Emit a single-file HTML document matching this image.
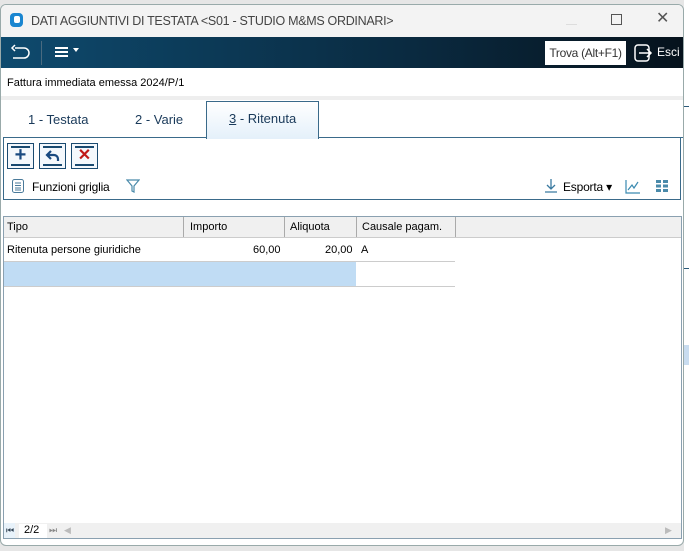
<!DOCTYPE html><html><head><style>
body{margin:0;width:689px;height:551px;background:#e6e6e6;font-family:"Liberation Sans",sans-serif;position:relative;overflow:hidden;font-size:12px;color:#000}
.a{position:absolute}
.b{position:absolute;top:138px;width:27px;height:26px;border:1px solid #1a4a70;box-sizing:border-box;background:#f4f8fc}
.b:before,.b:after{content:"";position:absolute;left:3px;right:3px;height:2px;background:#1a4a70}
.b:before{top:2px}.b:after{bottom:2px}
</style></head><body>
<div class="a" style="left:684px;top:0;width:5px;height:551px;background:#fff"></div>
<div class="a" style="left:684px;top:106px;width:5px;height:1px;background:#2a5a7a"></div>
<div class="a" style="left:684px;top:268px;width:5px;height:1px;background:#2a5a7a"></div>
<div class="a" style="left:684px;top:345px;width:5px;height:20px;background:#c8dcf0"></div>
<div class="a" style="left:0;top:4px;width:684px;height:542px;background:#fff;border:1px solid #9aa;border-radius:6px;box-sizing:border-box;overflow:hidden">
 <div class="a" style="left:0;top:0;width:684px;height:32px;background:#f3f3f3"></div>
 <div class="a" style="left:9px;top:8px;width:13px;height:14px;background:#1a86d0;border-radius:4px"><div class="a" style="left:4px;top:3px;width:6px;height:7px;background:#fff;border-radius:2px"></div></div>
 <div class="a" style="left:30px;top:9px;font-size:12.5px;color:#444;letter-spacing:-0.3px">DATI AGGIUNTIVI DI TESTATA &lt;S01 - STUDIO M&amp;MS ORDINARI&gt;</div>
 <div class="a" style="left:565px;top:19px;width:11px;height:1px;background:#ddd"></div>
 <div class="a" style="left:610px;top:9px;width:9px;height:9px;border:1px solid #555"></div>
 <div class="a" style="left:655px;top:3px;font-size:16px;color:#555">✕</div>
 <div class="a" style="left:0;top:32px;width:684px;height:31px;background:linear-gradient(90deg,#0e4a6e,#0a2a40 60%,#06121c)"></div>
 <svg class="a" style="left:8px;top:38px" width="24" height="20"><path d="M6 5h9a5 5 0 0 1 0 10H4M6 2L3 5l3 3" fill="none" stroke="#fff" stroke-width="1.5"/></svg>
 <div class="a" style="left:40px;top:36px;width:1px;height:24px;background:#4a6a80"></div>
 <div class="a" style="left:54px;top:42px;width:13px;height:10px;border-top:2px solid #fff;border-bottom:2px solid #fff;box-sizing:border-box"><div style="margin-top:2px;height:2px;background:#fff"></div></div>
 <div class="a" style="left:72px;top:43px;border:3px solid transparent;border-top:4px solid #fff"></div>
 <div class="a" style="left:544px;top:36px;width:81px;height:24px;background:#fff;font-size:12px;line-height:24px;text-align:center;color:#333;letter-spacing:-0.3px">Trova (Alt+F1)</div>
 <svg class="a" style="left:632px;top:38px" width="22" height="20"><rect x="2" y="2" width="14" height="16" rx="3" fill="none" stroke="#fff" stroke-width="1.5"/><path d="M6 10h12M14 6l4 4-4 4" fill="none" stroke="#fff" stroke-width="1.5"/></svg>
 <div class="a" style="left:656px;top:40px;color:#fff;font-size:12px">Esci</div>
 <div class="a" style="left:6px;top:72px;font-size:11px">Fattura immediata emessa 2024/P/1</div>
 <div class="a" style="left:0;top:91px;width:684px;height:4px;background:#eee"></div>
 <div class="a" style="left:27px;top:107px;font-size:13px;color:#1a3a5a">1 - Testata</div>
 <div class="a" style="left:134px;top:107px;font-size:13px;color:#1a3a5a">2 - Varie</div>
 <div class="a" style="left:205px;top:96px;width:113px;height:38px;border:1px solid #3a6a8a;border-bottom:none;background:linear-gradient(#fff,#e4f0fa);box-sizing:border-box"></div>
 <div class="a" style="left:228px;top:106px;font-size:13px;color:#1a3a5a"><u>3</u> - Ritenuta</div>
 <div class="a" style="left:2px;top:132px;width:203px;height:1px;background:#3a6a8a"></div>
 <div class="a" style="left:318px;top:132px;width:364px;height:1px;background:#3a6a8a"></div>
 <div class="a" style="left:2px;top:132px;width:678px;height:63px;border:1px solid #3a6a8a;border-top:none;box-sizing:border-box"></div>
 <div class="b" style="left:6px;text-align:center;font-size:20px;line-height:23px;color:#1a4a80;font-weight:bold">+</div>
 <div class="b" style="left:38px"><svg class="a" style="left:5px;top:5px" width="16" height="14"><path d="M3 6h6a4 4 0 0 1 4 4v2M6 2L2 6l4 4" fill="none" stroke="#1a4a80" stroke-width="2.2"/></svg></div>
 <div class="b" style="left:70px;text-align:center;font-size:16px;line-height:24px;color:#c01818;font-weight:bold">✕</div>
 <svg class="a" style="left:11px;top:174px" width="13" height="15"><rect x="0.5" y="0.5" width="11" height="13" rx="2" fill="none" stroke="#4a7a9a"/><path d="M3 4h6M3 6.5h6M3 9h6M3 11h6" stroke="#4a7a9a"/></svg>
 <div class="a" style="left:31px;top:175px;font-size:12px;letter-spacing:-0.2px">Funzioni griglia</div>
 <svg class="a" style="left:125px;top:174px" width="14" height="15"><path d="M1 1h12l-5 6v6l-2-1V7z" fill="none" stroke="#4a8aaa" stroke-width="1.2"/></svg>
 <svg class="a" style="left:543px;top:173px" width="14" height="16"><path d="M7 1v10M3 7l4 4 4-4M1 14h12" fill="none" stroke="#3a7aa0" stroke-width="1.3"/></svg>
 <div class="a" style="left:562px;top:175px;font-size:12px;letter-spacing:-0.2px">Esporta ▾</div>
 <svg class="a" style="left:624px;top:174px" width="16" height="15"><path d="M1 1v13h14M3 11l4-5 2 3 4-6" fill="none" stroke="#3a8ab0" stroke-width="1.2"/></svg>
 <svg class="a" style="left:655px;top:175px" width="12" height="12"><g fill="#4a8aaa"><rect x="0" y="0" width="5" height="3"/><rect x="7" y="0" width="5" height="3"/><rect x="0" y="4.5" width="5" height="3"/><rect x="7" y="4.5" width="5" height="3"/><rect x="0" y="9" width="5" height="3"/><rect x="7" y="9" width="5" height="3"/></g></svg>
 <div class="a" style="left:2px;top:211px;width:679px;height:323px;border:1px solid #8aa0b0;box-sizing:border-box"></div>
 <div class="a" style="left:3px;top:212px;width:677px;height:20px;background:#f0f0f0;border-bottom:1px solid #ccc"></div>
 <div class="a" style="left:182px;top:212px;width:1px;height:20px;background:#aaa"></div>
 <div class="a" style="left:283px;top:212px;width:1px;height:20px;background:#aaa"></div>
 <div class="a" style="left:355px;top:212px;width:1px;height:20px;background:#aaa"></div>
 <div class="a" style="left:454px;top:212px;width:1px;height:20px;background:#aaa"></div>
 <div class="a" style="left:6px;top:216px;font-size:11px">Tipo</div>
 <div class="a" style="left:189px;top:216px;font-size:11px">Importo</div>
 <div class="a" style="left:289px;top:216px;font-size:11px">Aliquota</div>
 <div class="a" style="left:361px;top:216px;font-size:11px">Causale pagam.</div>
 <div class="a" style="left:6px;top:239px;font-size:11px">Ritenuta persone giuridiche</div>
 <div class="a" style="left:252px;top:239px;font-size:11px">60,00</div>
 <div class="a" style="left:324px;top:239px;font-size:11px">20,00</div>
 <div class="a" style="left:360px;top:239px;font-size:11px">A</div>
 <div class="a" style="left:3px;top:256px;width:451px;height:1px;background:#ccc"></div>
 <div class="a" style="left:3px;top:257px;width:352px;height:24px;background:#c0dcf4"></div>
 <div class="a" style="left:3px;top:281px;width:451px;height:1px;background:#ccc"></div>
 <div class="a" style="left:3px;top:518px;width:677px;height:15px;background:#f0f0f0"></div>
 <div class="a" style="left:3px;top:518px;width:11px;height:15px;background:#e8f2fa"></div>
 <div class="a" style="left:5px;top:520px;font-size:9px;color:#345">⏮</div>
 <div class="a" style="left:18px;top:519px;width:28px;height:14px;background:#fff;font-size:11px;padding-left:5px;box-sizing:border-box">2/2</div>
 <div class="a" style="left:48px;top:520px;font-size:9px;color:#888">⏭</div>
 <div class="a" style="left:63px;top:520px;font-size:9px;color:#bbb">◀</div>
 <div class="a" style="left:664px;top:520px;font-size:9px;color:#bbb">▶</div>
</div>
</body></html>
